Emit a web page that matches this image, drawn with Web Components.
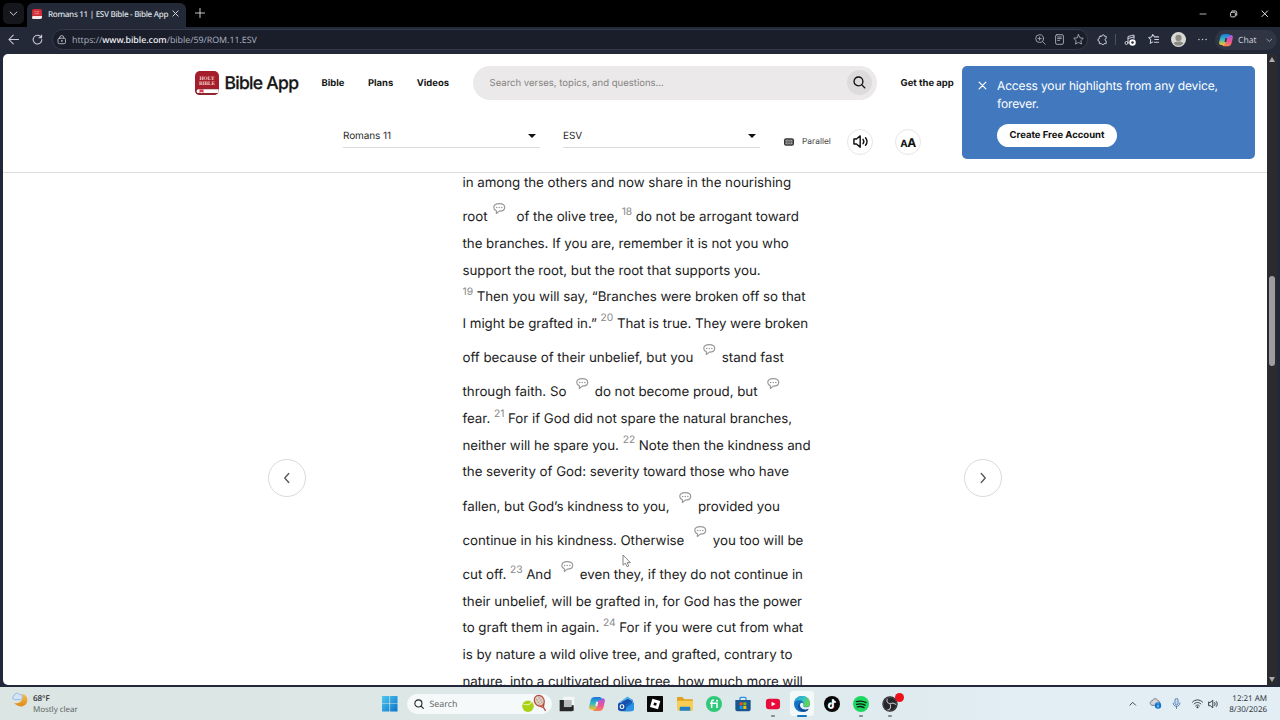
<!DOCTYPE html>
<html lang="en">
<head>
<meta charset="utf-8">
<title>Romans 11 | ESV Bible - Bible App</title>
<style>
    html, body {
        margin: 0;
        width: 1280px;
        height: 720px;
        overflow: hidden;
        background: #000;
        font-family: Inter, sans-serif;
        text-rendering: geometricPrecision;
    }
</style>
</head>
<body>
<app-desktop>
    <browser-tabs slot="tabs" label="Romans 11 | ESV Bible - Bible App"></browser-tabs>
    <browser-toolbar slot="toolbar"></browser-toolbar>
    <site-header slot="page"></site-header>
    <bible-reader slot="page">
        <verse-line>in among the others and now share in the nourishing</verse-line>
        <verse-line tall>root<verse-note tight></verse-note>of the olive tree, <verse-number>18</verse-number> do not be arrogant toward</verse-line>
        <verse-line>the branches. If you are, remember it is not you who</verse-line>
        <verse-line>support the root, but the root that supports you.</verse-line>
        <verse-line><verse-number>19</verse-number> Then you will say, “Branches were broken off so that</verse-line>
        <verse-line>I might be grafted in.” <verse-number>20</verse-number> That is true. They were broken</verse-line>
        <verse-line tall>off because of their unbelief, but you<verse-note></verse-note>stand fast</verse-line>
        <verse-line tall>through faith. So<verse-note></verse-note>do not become proud, but<verse-note></verse-note></verse-line>
        <verse-line>fear. <verse-number>21</verse-number> For if God did not spare the natural branches,</verse-line>
        <verse-line>neither will he spare you. <verse-number>22</verse-number> Note then the kindness and</verse-line>
        <verse-line>the severity of God: severity toward those who have</verse-line>
        <verse-line tall>fallen, but God’s kindness to you,<verse-note></verse-note>provided you</verse-line>
        <verse-line tall>continue in his kindness. Otherwise<verse-note></verse-note>you too will be</verse-line>
        <verse-line tall>cut off. <verse-number>23</verse-number> And<verse-note></verse-note>even they, if they do not continue in</verse-line>
        <verse-line>their unbelief, will be grafted in, for God has the power</verse-line>
        <verse-line>to graft them in again. <verse-number>24</verse-number> For if you were cut from what</verse-line>
        <verse-line>is by nature a wild olive tree, and grafted, contrary to</verse-line>
        <verse-line>nature, into a cultivated olive tree, how much more will</verse-line>
    </bible-reader>
    <page-scrollbar slot="scrollbar"></page-scrollbar>
    <task-bar slot="taskbar"></task-bar>
</app-desktop>

<script>
const stroke = (body, width = 1.5) =>
    `<g fill="none" stroke="currentColor" stroke-width="${width}" stroke-linecap="round" stroke-linejoin="round">${body}</g>`;

// every icon is drawn on a 24x24 grid
const ICONS = {
    chevronDown: stroke('<path d="M3 8l9 8.500L21 8"/>', 2.4),
    chevronUp: stroke('<path d="M3 16.500l9-9 9 9"/>', 3),
    chevronLeft: stroke('<path d="M15.500 3L7.500 12l8 9"/>', 2.6),
    chevronRight: stroke('<path d="M8.500 3l8 9-8 9"/>', 2.6),
    close: stroke('<path d="M3 3l18 18M21 3L3 21"/>', 3.2),
    plus: stroke('<path d="M12 1v22M1 12h22"/>', 2.1),
    minus: stroke('<path d="M3 12h18"/>', 2.4),
    restore: stroke('<rect x="2" y="7" width="15" height="15" rx="3"/><path d="M7 3h10a4.500 4.500 0 0 1 4.500 4.500V17"/>', 3),
    back: stroke('<path d="M23 12H2M11.500 2.500L2 12l9.500 9.500"/>', 2.2),
    reload: stroke('<path d="M20.500 8A9.500 9.500 0 1 0 21.500 12M21 2v6h-6"/>', 2.2),
    lock: stroke('<rect x="2.500" y="8" width="19" height="14" rx="3.500"/><path d="M7 8V6.500a5 5 0 0 1 10 0V8"/><circle cx="12" cy="15" r="1"/>', 2),
    zoom: stroke('<circle cx="10" cy="10" r="8.500"/><path d="M16.500 16.500l6 6M10 6.500v7M6.500 10h7"/>', 1.9),
    reader: stroke('<rect x="3.500" y="1.500" width="17" height="21" rx="3"/><path d="M8 6.500h8M8 10h8M8 14h4"/>', 2),
    star: stroke('<path d="M12 1.500l3.200 6.800 7.300 1-5.300 5.200 1.300 7.500-6.500-3.600L5.500 22l1.300-7.500L1.500 9.300l7.300-1z"/>', 1.9),
    puzzle: stroke('<path d="M7 5h3.500a3 3 0 0 1 6 0H20v5a2.500 2.500 0 0 0 0 5v6h-4.500a2.800 2.800 0 0 1-5.500 0H5v-5a3 3 0 0 1 0-6V7a2 2 0 0 1 2-2z"/>', 2.1),
    media: stroke('<path d="M8 17V5l12-3v7M8 9l12-3"/><circle cx="5" cy="18" r="3"/>', 2) +
        '<circle cx="17" cy="17" r="6.500" fill="#fff"/><circle cx="17" cy="17" r="2.500" fill="#242938"/>',
    favorites: stroke('<path d="M22 6h-8.500L10 1 7.300 6.300 1.500 7.300l4.200 4.400-1 8L10 16.500M14 11.500h8M13.500 17H22"/>', 2.1),
    search: stroke('<circle cx="10.500" cy="10.500" r="8.500"/><path d="M17 17l5.500 5.500"/>', 2.6),
    avatar: '<circle cx="12" cy="12" r="12" fill="#d9d8d3"/><circle cx="12" cy="9.500" r="5" fill="#8d8b85"/><path d="M4 18c2-4 14-4 16 0a10 10 0 0 1-16 0z" fill="#8d8b85"/>',
    more: '<g fill="currentColor"><circle cx="2.500" cy="12" r="2"/><circle cx="12" cy="12" r="2"/><circle cx="21.500" cy="12" r="2"/></g>',
    sound: stroke('<path d="M1.500 8v8h4l6 5V3l-6 5z"/><path d="M16 8.500c1.500 2 1.500 5 0 7M20 6c3 3.500 3 8.500 0 12"/>', 2.3),
    parallel: '<rect x="0" y="3" width="24" height="18" rx="5" fill="#333"/><path d="M3.500 8h4M3.500 12h4M3.500 16h4M16.500 8h4M16.500 12h4M16.500 16h4M10.500 8h3M10.500 12h3M10.500 16h3" stroke="#e2e2e2" stroke-width="2"/><path d="M9 5v14M15 5v14" stroke="#ccc" stroke-width="1.200"/>',
    note: stroke('<path d="M12 3C5.500 3 1.500 6 1.500 10.500c0 3 2 5 5 6.200V22l5.500-4.500c6.500 0 10.500-2.500 10.500-7S18.500 3 12 3z"/>', 2.3) +
        '<g fill="currentColor"><circle cx="7" cy="10.500" r="1.500"/><circle cx="12" cy="10.500" r="1.500"/><circle cx="17" cy="10.500" r="1.500"/></g>',
    bible: `<rect width="24" height="24" rx="5" fill="#a61e2b"/>
        <path d="M0 19.500A3 3 0 0 1 3 17h21v2a5 5 0 0 1-5 5H5a5 5 0 0 1-5-4.500z" fill="#8c2630"/>
        <path d="M3.500 18.300H23.700V22H3.500a1.800 1.800 0 0 1 0-3.700z" fill="#fff"/>
        <path d="M4.500 18.600h4V22l-2-1.300-2 1.300z" fill="#e2354a"/>
        <g fill="#f0d6cf" font-family="Liberation Serif, serif" font-weight="700" font-size="5.300" text-anchor="middle"><text x="12" y="8.800">HOLY</text><text x="12" y="14">BIBLE</text></g>`,
    favicon: '<rect width="24" height="24" rx="5" fill="#d02c36"/><path d="M3 17h21v3a4 4 0 0 1-4 4H4a3 3 0 0 1-1-7z" fill="#f4e9e8"/><path d="M6 6.500h12M6 11.500h12" stroke="#f3aaa5" stroke-width="2.500" stroke-dasharray="2 1"/>',
    copilot: `<linearGradient id="a" x1="0" y1="0" x2="0" y2="1"><stop offset="0" stop-color="#1a74dc"/><stop offset=".5" stop-color="#36b7c4"/><stop offset="1" stop-color="#f6c51f"/></linearGradient>
        <linearGradient id="b" x1="0" y1="0" x2="0" y2="1"><stop offset="0" stop-color="#a45ae8"/><stop offset=".55" stop-color="#ec5396"/><stop offset="1" stop-color="#fb8450"/></linearGradient>
        <path d="M15 22.500H8.500c-2 0-2.700-1-3.300-3L4.500 17H8c2 0 3-1 3.500-3l2-7.500c.6-2 1.500-3 3.500-3h3c3.500 0 4.500 2 3.500 6l-2 8c-1 3.500-3 5-6.500 5z" fill="url(#b)"/>
        <path d="M9 1.500h6.500c2 0 2.700 1 3.300 3L19 6h-2.500c-2 0-3 1.500-3.500 3.500l-2 8c-.6 2-2 3-4 3H4c-3.500 0-4.500-2-3.500-6l2-8C3.500 3 5.500 1.500 9 1.500z" fill="url(#a)"/>
        <path d="M10.800 8.500h3L12.600 15.500H9.500z" fill="var(--hole, #e8efef)"/>`,
    weather: `<linearGradient id="m" x1="0" y1="0" x2="0" y2="1"><stop offset="0" stop-color="#f7c04f"/><stop offset="1" stop-color="#de8b1b"/></linearGradient>
        <path d="M15 2.500c7 1 10 8 7 14S10 24 3 16.500c9 2 15-5 12-14z" fill="url(#m)"/>
        <path d="M4 11.500a3.200 3.200 0 0 1-.5-6.300C4 1.500 9.500.5 11.200 4c3.500-.4 5 2 4.300 4.500-.5 2-1.500 3-3.500 3z" fill="#d3e3f8" stroke="#8cacd8" stroke-width="1.200"/>`,
    windows: '<linearGradient id="w" x1="0" y1="0" x2="1" y2="1"><stop offset="0" stop-color="#4fc8ee"/><stop offset="1" stop-color="#0b74c9"/></linearGradient><path d="M0 0h11.500v11.500H0zM12.500 0H24v11.500H12.500zM0 12.500h11.500V24H0zM12.500 12.500H24V24H12.500z" fill="url(#w)"/>',
    tennis: `<g transform="rotate(-32 17 11)"><ellipse cx="16" cy="7.500" rx="6" ry="7" fill="#e8d4c3" stroke="#bb4a42" stroke-width="1.600"/><path d="M12 5h8M11 8h10M12 11h8M14 1.500v12M18 1.500v12" stroke="#a9988e" stroke-width=".6"/><path d="M13 13.500l3 4 3-4M16 17v5.500" fill="none" stroke="#bb4a42" stroke-width="1.600"/></g>
        <circle cx="0" cy="15.500" r="7.300" fill="#a9d117"/><path d="M-6 13c6 1.500 9.500-1 10.500-3" fill="none" stroke="#e6f29a" stroke-width="1.300"/>`,
    taskview: '<rect x="6" y="1" width="17" height="17" rx="1" fill="#f5f6f6"/><path d="M2 6h12v8h8v8H2z" fill="#202020"/><path d="M7 6h12v11H7z" fill="#b9bcbc"/><path d="M1 6h6v11h13v6H1z" fill="#262626"/>',
    outlook: '<path d="M2 10L14 1l8 5v14l-4 3H4l-2-3z" fill="#1567c1"/><path d="M2 10L14 1l8 5-10 7z" fill="#55b7f2"/><path d="M8 21L24 9v10.500A3.500 3.500 0 0 1 20.500 23H9z" fill="#2992e4"/><path d="M5 9l10-5 6 4-10 6z" fill="#1550ae"/><rect y="10" width="12" height="12" rx="2.500" fill="#174eaa"/><circle cx="6" cy="16" r="2.800" fill="none" stroke="#fff" stroke-width="1.700"/>',
    roblox: '<rect width="24" height="24" rx="1" fill="#080808"/><path d="M8 4l12 3.500L16.500 20 4.500 16.500z" fill="#fff"/><path d="M10.700 9.700l4 1.100-1.100 3.900-4-1.100z" fill="#080808"/>',
    folder: '<path d="M0 3a1.500 1.500 0 0 1 1.500-1.500H8L11 5h11.500A1.500 1.500 0 0 1 24 6.500v5H0z" fill="#dfa01c"/><path d="M0 7h24v13.500a1.500 1.500 0 0 1-1.500 1.500h-21A1.500 1.500 0 0 1 0 20.500z" fill="#f9cd55"/><path d="M4 22v-4.500A1.500 1.500 0 0 1 5.500 16h13a1.500 1.500 0 0 1 1.500 1.500V22z" fill="#2080cc"/>',
    fiverr: '<circle cx="12" cy="12" r="12" fill="#2fc979"/><path d="M6 11h10.500v7M8.500 18V9c0-2 1-3 3.500-3" fill="none" stroke="#fff" stroke-width="2.300"/><circle cx="16.500" cy="7.200" r="1.500" fill="#fff"/>',
    store: '<path d="M7.500 6V3.500A1.500 1.500 0 0 1 9 2h6a1.500 1.500 0 0 1 1.500 1.500V6" fill="none" stroke="#2c91dc" stroke-width="2"/><path d="M0.500 6h23v14a3 3 0 0 1-3 3h-17a3 3 0 0 1-3-3z" fill="#1c568f"/><path d="M7 9.500h4.500V14H7z" fill="#f25022"/><path d="M12.500 9.500H17V14h-4.500z" fill="#7fba00"/><path d="M7 15h4.500v4.500H7z" fill="#00a4ef"/><path d="M12.500 15H17v4.500h-4.500z" fill="#ffb900"/>',
    youtube: '<rect y="3" width="24" height="18" rx="5" fill="#e80c3c"/><path d="M9.500 8l7 4-7 4z" fill="#fff"/>',
    edge: `<linearGradient id="e" x1="0" y1="0" x2="1" y2=".4"><stop offset="0" stop-color="#2497d8"/><stop offset=".6" stop-color="#36c4c2"/><stop offset="1" stop-color="#68d34d"/></linearGradient>
        <circle cx="12" cy="12" r="12" fill="#1673c4"/>
        <path d="M0 11C1 4 6 0 12 0c7 0 12 5 12 10.500 0 4-3 6-6.500 6-3 0-4.500-1.500-3.500-3C15.500 9 12 6.500 8 6.500 4 6.500 1 8.500 0 11z" fill="url(#e)"/>
        <path d="M8.500 13c0 5 5 8.500 12 6.500 1-.4 1.500.2 1 1C19 24 13 24.500 9.500 22 5 18.500 5 12 10 9.500 9 10.500 8.500 11.500 8.500 13z" fill="#114d98"/>
        <path d="M12 10c2 1 2.500 2 2 3.500-1 2 1 3.500 4 3.500 3 0 5-1.500 6-4-.3 3-1.500 5-3 6.500-7 2-12-1.500-12-6C9 11.500 10 10 12 10z" fill="#e9f2f7"/>`,
    tiktok: '<circle cx="12" cy="12" r="12" fill="#080808"/><g fill="none" stroke-width="2.300"><path d="M11.500 11c-5 0-5.500 7-1 7 2 0 3-1.500 3-3V5c.3 2.500 2 4 4 4" stroke="#fe2c55" transform="translate(.7 .5)"/><path d="M11.500 11c-5 0-5.500 7-1 7 2 0 3-1.500 3-3V5c.3 2.500 2 4 4 4" stroke="#25f4ee" transform="translate(-.7 -.5)"/><path d="M11.500 11c-5 0-5.500 7-1 7 2 0 3-1.500 3-3V5c.3 2.500 2 4 4 4" stroke="#fff"/></g>',
    spotify: '<circle cx="12" cy="12" r="12" fill="#1fd660"/><path d="M5 8.500c5-1.500 10-1 14.500 1.500M5.500 12.500c4.500-1.300 8.500-.8 12.500 1.300M6.500 16.300c3.500-1 7-.7 10 1.200" fill="none" stroke="#0b1d12" stroke-width="2" stroke-linecap="round"/>',
    obs: '<circle cx="12" cy="12" r="11.500" fill="#26252a"/><circle cx="12" cy="12" r="10" fill="none" stroke="#55545a"/><g fill="none" stroke="#b9b7bb" stroke-width="1.600"><path d="M8 4c-2 5 1 7 4 7.500M21 13c-4-4-7-2-9-1.500M8 21c5 0 6-5 4-9.500"/></g>',
    onedrive: '<path d="M4 16C-1 14-.5 7 4.500 6.500 7 0 15 0 17.500 6c5 1 5 8 2 10z" fill="#d4d6d8" stroke="#636a70" stroke-width="1.800"/><circle cx="17.500" cy="16.500" r="7" fill="#1277cf"/><path d="M17.500 12v1.700M17.500 15.500v5" stroke="#fff" stroke-width="1.800"/>',
    mic: '<rect x="8.500" y="1" width="7" height="14" rx="3.500" fill="#bed7ee" stroke="#3e6ca1" stroke-width="1.600"/>' + stroke('<path d="M4.500 11c0 10 15 10 15 0M12 18.500V23"/>', 1.8),
    wifi: stroke('<path d="M1 9c6-6.500 16-6.500 22 0M4.500 13c4.500-4.500 10.500-4.500 15 0M8 17c2.500-2.500 5.500-2.500 8 0"/>', 2.1) + '<circle cx="12" cy="20" r="2.200" fill="currentColor"/>'
};

class UiIcon extends HTMLElement {
    constructor() {
        super();
        this.attachShadow({ mode: 'open' });
    }

    connectedCallback() {
        const size = this.getAttribute('size') || 12;
        this.shadowRoot.innerHTML = `
            <style>
                :host { display: inline-flex; flex: none; width: ${size}px; height: ${size}px; }
                svg { width: 100%; height: 100%; overflow: visible; }
            </style>
            <svg viewBox="0 0 24 24" aria-hidden="true">${ICONS[this.getAttribute('name')]}</svg>
        `;
    }
}

class AppDesktop extends HTMLElement {
    constructor() {
        super();
        this.attachShadow({ mode: 'open' }).innerHTML = `
            <style>
                :host { display: flex; flex-direction: column; width: 1280px; height: 720px; position: relative; }
                .view {
                    display: flex;
                    flex: 1;
                    min-height: 0;
                    padding: 0 0 2px 3px;
                    background: #222839;
                }
                .page {
                    display: flex;
                    flex-direction: column;
                    width: 1264px;
                    background: #fff;
                    border-radius: 5px 0 0 5px;
                    overflow: hidden;
                }
                .cursor { position: absolute; left: 622px; top: 554px; width: 10px; height: 14px; }
            </style>
            <slot name="tabs"></slot>
            <slot name="toolbar"></slot>
            <div class="view">
                <div class="page"><slot name="page"></slot></div>
                <slot name="scrollbar"></slot>
            </div>
            <slot name="taskbar"></slot>
            <svg class="cursor" viewBox="0 0 10 14"><path d="M1 1v10.200l2.400-2 1.700 3.600 1.700-.8-1.600-3.400h3.200z" fill="#fff" stroke="#777" stroke-width=".9"/></svg>
        `;
    }
}

class BrowserTabs extends HTMLElement {
    constructor() {
        super();
        this.attachShadow({ mode: 'open' });
    }

    connectedCallback() {
        this.shadowRoot.innerHTML = `
            <style>
                :host {
                    display: flex;
                    height: 27px;
                    background: #000;
                    color: #dfe1e6;
                    font-family: "Noto Sans", sans-serif;
                }
                .menu {
                    display: flex; align-items: center; justify-content: center;
                    width: 21px; height: 21px; margin: 3px 3px 0 3px;
                    border-radius: 5px; background: #15171d;
                }
                .tab {
                    display: flex; align-items: center; box-sizing: border-box;
                    width: 159px; height: 24px; margin-top: 3px; padding: 0 7px 3px 5px;
                    border-radius: 6px 6px 0 0; background: #242938;
                }
                .label { flex: 1; margin: 1px 0 0 6px; font-size: 8.100px; font-weight: 500; letter-spacing: -.31px; white-space: nowrap; }
                .new { margin: 8px 0 0 9px; }
                .window { display: flex; align-items: center; gap: 23px; margin-left: auto; padding-right: 12px; }
            </style>
            <div class="menu"><ui-icon name="chevronDown" size="9"></ui-icon></div>
            <div class="tab">
                <ui-icon name="favicon" size="10"></ui-icon>
                <span class="label">${this.getAttribute('label')}</span>
                <ui-icon name="close" size="7"></ui-icon>
            </div>
            <ui-icon class="new" name="plus" size="10"></ui-icon>
            <div class="window">
                <ui-icon name="minus" size="8"></ui-icon>
                <ui-icon name="restore" size="7.500"></ui-icon>
                <ui-icon name="close" size="7.500"></ui-icon>
            </div>
        `;
    }
}

class BrowserToolbar extends HTMLElement {
    constructor() {
        super();
        this.attachShadow({ mode: 'open' }).innerHTML = `
            <style>
                :host {
                    display: flex; align-items: center; box-sizing: border-box;
                    height: 26.500px; padding: 0 3px 1px 8px;
                    background: #242938; color: #ccd0da;
                    font-family: "Noto Sans", sans-serif;
                }
                .reload { margin: 0 9px 0 12.500px; }
                .address {
                    display: flex; align-items: center; box-sizing: border-box; flex: none;
                    width: 1036px; height: 21px; padding: 0 3px 0 4px;
                    border: 1px solid #353b4a; border-radius: 11px; background: #1a1e2b;
                }
                .url { flex: 1; margin-left: 6px; font-size: 8.870px; color: #a5abb9; letter-spacing: -.04px; }
                .url b { font-weight: 500; color: #f2f3f6; }
                .tools { display: flex; gap: 8px; color: #a9aeba; }
                .ext { margin-left: 9px; }
                .rule { width: 1px; height: 11px; margin: 0 8px 0 7px; background: #4a5060; }
                .side { display: flex; align-items: center; gap: 12px; }
                .chat {
                    display: flex; align-items: center; box-sizing: border-box; flex: none;
                    width: 62px; height: 20px; margin-left: 8px; padding: 0 5px 0 4px;
                    border-radius: 10px; background: #303543; --hole: #303543;
                    font-size: 8.600px;
                }
                .chat span { flex: 1; margin-left: 5px; }
            </style>
            <ui-icon name="back" size="11"></ui-icon>
            <ui-icon class="reload" name="reload" size="11"></ui-icon>
            <div class="address">
                <ui-icon name="lock" size="9.500"></ui-icon>
                <span class="url">https://<b>www.bible.com</b>/bible/59/ROM.11.ESV</span>
                <div class="tools">
                    <ui-icon name="zoom" size="11"></ui-icon>
                    <ui-icon name="reader" size="11"></ui-icon>
                    <ui-icon name="star" size="11"></ui-icon>
                </div>
            </div>
            <ui-icon class="ext" name="puzzle" size="11"></ui-icon>
            <div class="rule"></div>
            <div class="side">
                <ui-icon name="media" size="12"></ui-icon>
                <ui-icon name="favorites" size="11.500"></ui-icon>
                <ui-icon name="avatar" size="15"></ui-icon>
                <ui-icon name="more" size="9"></ui-icon>
            </div>
            <div class="chat">
                <ui-icon name="copilot" size="14"></ui-icon>
                <span>Chat</span>
                <ui-icon name="chevronDown" size="6.500"></ui-icon>
            </div>
        `;
    }
}

class SiteHeader extends HTMLElement {
    constructor() {
        super();
        this.attachShadow({ mode: 'open' }).innerHTML = `
            <style>
                :host {
                    display: block; flex: none; box-sizing: border-box; position: relative;
                    height: 119px; border-bottom: 1px solid #dedede; color: #161616;
                }
                .top { display: flex; align-items: center; height: 34px; padding: 12px 0 0 192px; }
                .brand { padding-top: 1px; margin-left: 5.500px; width: 97px; font-size: 17.500px; font-weight: 500; letter-spacing: -.7px; white-space: nowrap; -webkit-text-stroke: .25px; }
                nav { display: flex; gap: 23.500px; padding-top: 2px; font-size: 9.450px; font-weight: 700; }
                .search {
                    display: flex; align-items: center; justify-content: space-between; box-sizing: border-box; flex: none;
                    width: 404px; height: 34px; margin: 0 24px 0 auto; padding: 0 5px 0 17px;
                    border-radius: 17px; background: #ebe9e9; color: #858383;
                    font-size: 9.550px;
                }
                .search span { padding-top: 1.500px; }
                .find { display: flex; align-items: center; justify-content: center; width: 25px; height: 25px; border-radius: 50%; background: #dddbdb; color: #111; }
                .get { width: 366.500px; padding-top: 2px; font-size: 9.500px; font-weight: 700; white-space: nowrap; }
                .bar { display: flex; align-items: flex-start; padding: 28.500px 0 0 340px; font-size: 10px; }
                .select {
                    display: flex; align-items: flex-start; justify-content: space-between; box-sizing: border-box;
                    width: 197px; height: 20px; margin-right: 23px; padding: 1px 4px 0 0;
                    border-bottom: 1px solid #dcdcdc; line-height: 14px; color: #2b2b2b; letter-spacing: -.1px;
                }
                .caret { width: 0; height: 0; margin-top: 5px; border: 4px solid transparent; border-top-color: #111; border-bottom: 0; }
                .parallel { display: flex; align-items: center; gap: 8px; width: 63px; height: 26px; margin: .5px 0 0 1px; font-size: 8.400px; color: #444; }
                .parallel span { padding-top: 1px; }
                .round {
                    display: flex; align-items: center; justify-content: center; box-sizing: border-box;
                    width: 26px; height: 26px; margin: .5px 22px 0 0;
                    border: 1px solid #e6e6e6; border-radius: 50%; font-weight: 700; color: #111;
                }
                .aa { padding-top: 1px; font-size: 12px; letter-spacing: -.4px; }
                .aa small { font-size: 10px; }
                promo-card { position: absolute; left: 959px; top: 12px; }
            </style>
            <div class="top">
                <ui-icon name="bible" size="24"></ui-icon>
                <span class="brand">Bible App</span>
                <nav><span>Bible</span><span>Plans</span><span>Videos</span></nav>
                <div class="search"><span>Search verses, topics, and questions...</span><div class="find"><ui-icon name="search" size="12.500"></ui-icon></div></div>
                <span class="get">Get the app</span>
            </div>
            <div class="bar">
                <div class="select">Romans 11<i class="caret"></i></div>
                <div class="select">ESV<i class="caret"></i></div>
                <div class="parallel"><ui-icon name="parallel" size="10"></ui-icon><span>Parallel</span></div>
                <div class="round"><ui-icon name="sound" size="15"></ui-icon></div>
                <div class="round"><span class="aa"><small>A</small>A</span></div>
            </div>
            <promo-card action="Create Free Account">Access your highlights from any device, forever.</promo-card>
        `;
    }
}

class PromoCard extends HTMLElement {
    constructor() {
        super();
        this.attachShadow({ mode: 'open' });
    }

    connectedCallback() {
        this.shadowRoot.innerHTML = `
            <style>
                :host {
                    display: flex; box-sizing: border-box; width: 293px; height: 93px;
                    padding: 11px 16px; border-radius: 5px; background: #4178be; color: #fff;
                }
                .close { margin: 4.500px 10px 0 0; }
                .text { font-size: 12px; line-height: 18px; letter-spacing: -.15px; }
                button {
                    display: block; width: 120px; height: 23px; margin-top: 11px; padding: 1px 0 0;
                    border: none; border-radius: 12px; background: #fff; color: #111;
                    font: 700 9.500px Inter, sans-serif; text-rendering: inherit; white-space: nowrap;
                }
            </style>
            <ui-icon class="close" name="close" size="9"></ui-icon>
            <div>
                <div class="text"><slot></slot></div>
                <button>${this.getAttribute('action')}</button>
            </div>
        `;
    }
}

class BibleReader extends HTMLElement {
    constructor() {
        super();
        this.attachShadow({ mode: 'open' }).innerHTML = `
            <style>
                :host { display: flex; flex: 1; min-height: 0; align-items: flex-start; padding-left: 265px; }
                .turn {
                    display: flex; align-items: center; justify-content: center; box-sizing: border-box; flex: none;
                    width: 38px; height: 38px; margin-top: 286px;
                    border: 1px solid #dadada; border-radius: 50%; color: #555; background: #fff;
                }
                .text { width: 501.500px; padding-left: 156.500px; color: #1d1d1d; font-size: 13.333px; letter-spacing: -.04px; }
            </style>
            <div class="turn"><ui-icon name="chevronLeft" size="12"></ui-icon></div>
            <div class="text"><slot></slot></div>
            <div class="turn"><ui-icon name="chevronRight" size="12"></ui-icon></div>
        `;
    }
}

class VerseLine extends HTMLElement {
    constructor() {
        super();
        this.attachShadow({ mode: 'open' }).innerHTML = `
            <style>
                :host { display: block; height: 26.670px; line-height: 26.670px; padding: 0; white-space: nowrap; position: relative; top: -2.500px; }
                :host([tall]) { padding-top: 7.600px; }
            </style>
            <slot></slot>
        `;
    }
}

class VerseNumber extends HTMLElement {
    constructor() {
        super();
        this.attachShadow({ mode: 'open' }).innerHTML = `
            <style>
                :host { display: inline-block; color: #888; font-size: 10.300px; line-height: 1; vertical-align: 6.500px; }
            </style>
            <slot></slot>
        `;
    }
}

class VerseNote extends HTMLElement {
    constructor() {
        super();
        this.attachShadow({ mode: 'open' }).innerHTML = `
            <style>
                :host { display: inline-block; height: 12px; margin: 0 6.500px 0 9.500px; line-height: 0; vertical-align: 0; color: #999; position: relative; top: -7px; }
                :host([tight]) { margin: 0 10.500px 0 6px; }
            </style>
            <ui-icon name="note" size="12.500"></ui-icon>
        `;
    }
}

class PageScrollbar extends HTMLElement {
    constructor() {
        super();
        this.attachShadow({ mode: 'open' }).innerHTML = `
            <style>
                :host {
                    display: flex; flex-direction: column; align-items: center; justify-content: space-between; box-sizing: border-box;
                    width: 10px; padding: 3px 0; background: #2b2b2e;
                }
                i { width: 0; height: 0; border: 3px solid transparent; }
                .up { border-bottom: 5px solid #aaa; border-top: 0; }
                .down { border-top: 5px solid #aaa; border-bottom: 0; }
                .thumb { width: 6px; height: 90px; margin: 214px 0 auto; border-radius: 3px; background: #9d9d9f; }
            </style>
            <i class="up"></i><div class="thumb"></div><i class="down"></i>
        `;
    }
}

class TaskBar extends HTMLElement {
    constructor() {
        super();
        const apps = ['taskview', 'copilot', 'outlook', 'roblox', 'folder', 'fiverr', 'store', 'youtube', 'edge', 'tiktok', 'spotify', 'obs'];
        const running = ['youtube', 'spotify', 'obs'];
        const buttons = apps.map((name) => {
            const state = name === 'edge' ? 'active' : running.includes(name) ? 'running' : '';
            return `<div class="app ${state} ${name}"><ui-icon name="${name}" size="16"></ui-icon></div>`;
        }).join('');

        this.attachShadow({ mode: 'open' }).innerHTML = `
            <style>
                :host {
                    display: flex; align-items: center; box-sizing: border-box; height: 33px; padding: 0 13px 0 12px;
                    background: linear-gradient(90deg, #dbe6e4, #dce7e7 50%, #e2edf4 80%);
                    color: #222; font-family: "Noto Sans", sans-serif; font-size: 8px; line-height: 11px;
                }
                .weather { display: flex; gap: 5px; width: 370px; letter-spacing: -.05px; }
                .weather div { padding-top: 1px; }
                .weather b { display: block; font-weight: 500; }
                .weather span { color: #5d6665; }
                .search {
                    display: flex; align-items: center; box-sizing: border-box; width: 145px; height: 20px;
                    margin: 0 1px 0 9px; padding: 0 5px 0 7px; border-radius: 10px; background: #f6f9f9;
                }
                .search span { flex: 1; padding-top: 1px; margin-left: 6px; font-size: 8.800px; color: #606465; }
                .app {
                    display: flex; align-items: center; justify-content: center; position: relative;
                    width: 24px; height: 25px; margin: 0 2.700px;
                    border-radius: 3px;
                }
                .app.active { background: #f3f8f9; }
                .app.running::after, .app.active::after {
                    content: ''; position: absolute; bottom: -1px; width: 4px; height: 2px; border-radius: 1px; background: #858b8f;
                }
                .app.active::after { width: 10px; background: #1475bd; }
                .app.obs::before { content: ''; position: absolute; right: -2px; top: 2px; width: 9px; height: 9px; border-radius: 50%; background: #ee111b; z-index: 1; }
                .youtube ui-icon { transform: scale(.88); }
                .tray { display: flex; align-items: center; margin-left: auto; color: #30363c; }
                .drive { margin-left: 14px; }
                .mic { margin: 0 10px; color: #3e6ca1; }
                .wifi { margin-right: 5px; }
                .clock { margin-left: 8px; padding-top: 1px; width: 41px; text-align: right; white-space: nowrap; letter-spacing: -.03px; }
            </style>
            <div class="weather">
                <ui-icon name="weather" size="16"></ui-icon>
                <div><b>68°F</b><span>Mostly clear</span></div>
            </div>
            <ui-icon name="windows" size="15.500"></ui-icon>
            <div class="search"><ui-icon name="search" size="10"></ui-icon><span>Search</span><ui-icon name="tennis" size="19"></ui-icon></div>
            ${buttons}
            <div class="tray">
                <ui-icon name="chevronUp" size="7.500"></ui-icon>
                <ui-icon class="drive" name="onedrive" size="11"></ui-icon>
                <ui-icon class="mic" name="mic" size="11"></ui-icon>
                <ui-icon class="wifi" name="wifi" size="11"></ui-icon>
                <ui-icon name="sound" size="10"></ui-icon>
                <div class="clock">12:21 AM<br>8/30/2026</div>
            </div>
        `;
    }
}

customElements.define('ui-icon', UiIcon);
customElements.define('app-desktop', AppDesktop);
customElements.define('browser-tabs', BrowserTabs);
customElements.define('browser-toolbar', BrowserToolbar);
customElements.define('promo-card', PromoCard);
customElements.define('site-header', SiteHeader);
customElements.define('bible-reader', BibleReader);
customElements.define('verse-line', VerseLine);
customElements.define('verse-number', VerseNumber);
customElements.define('verse-note', VerseNote);
customElements.define('page-scrollbar', PageScrollbar);
customElements.define('task-bar', TaskBar);
</script>
</body>
</html>
